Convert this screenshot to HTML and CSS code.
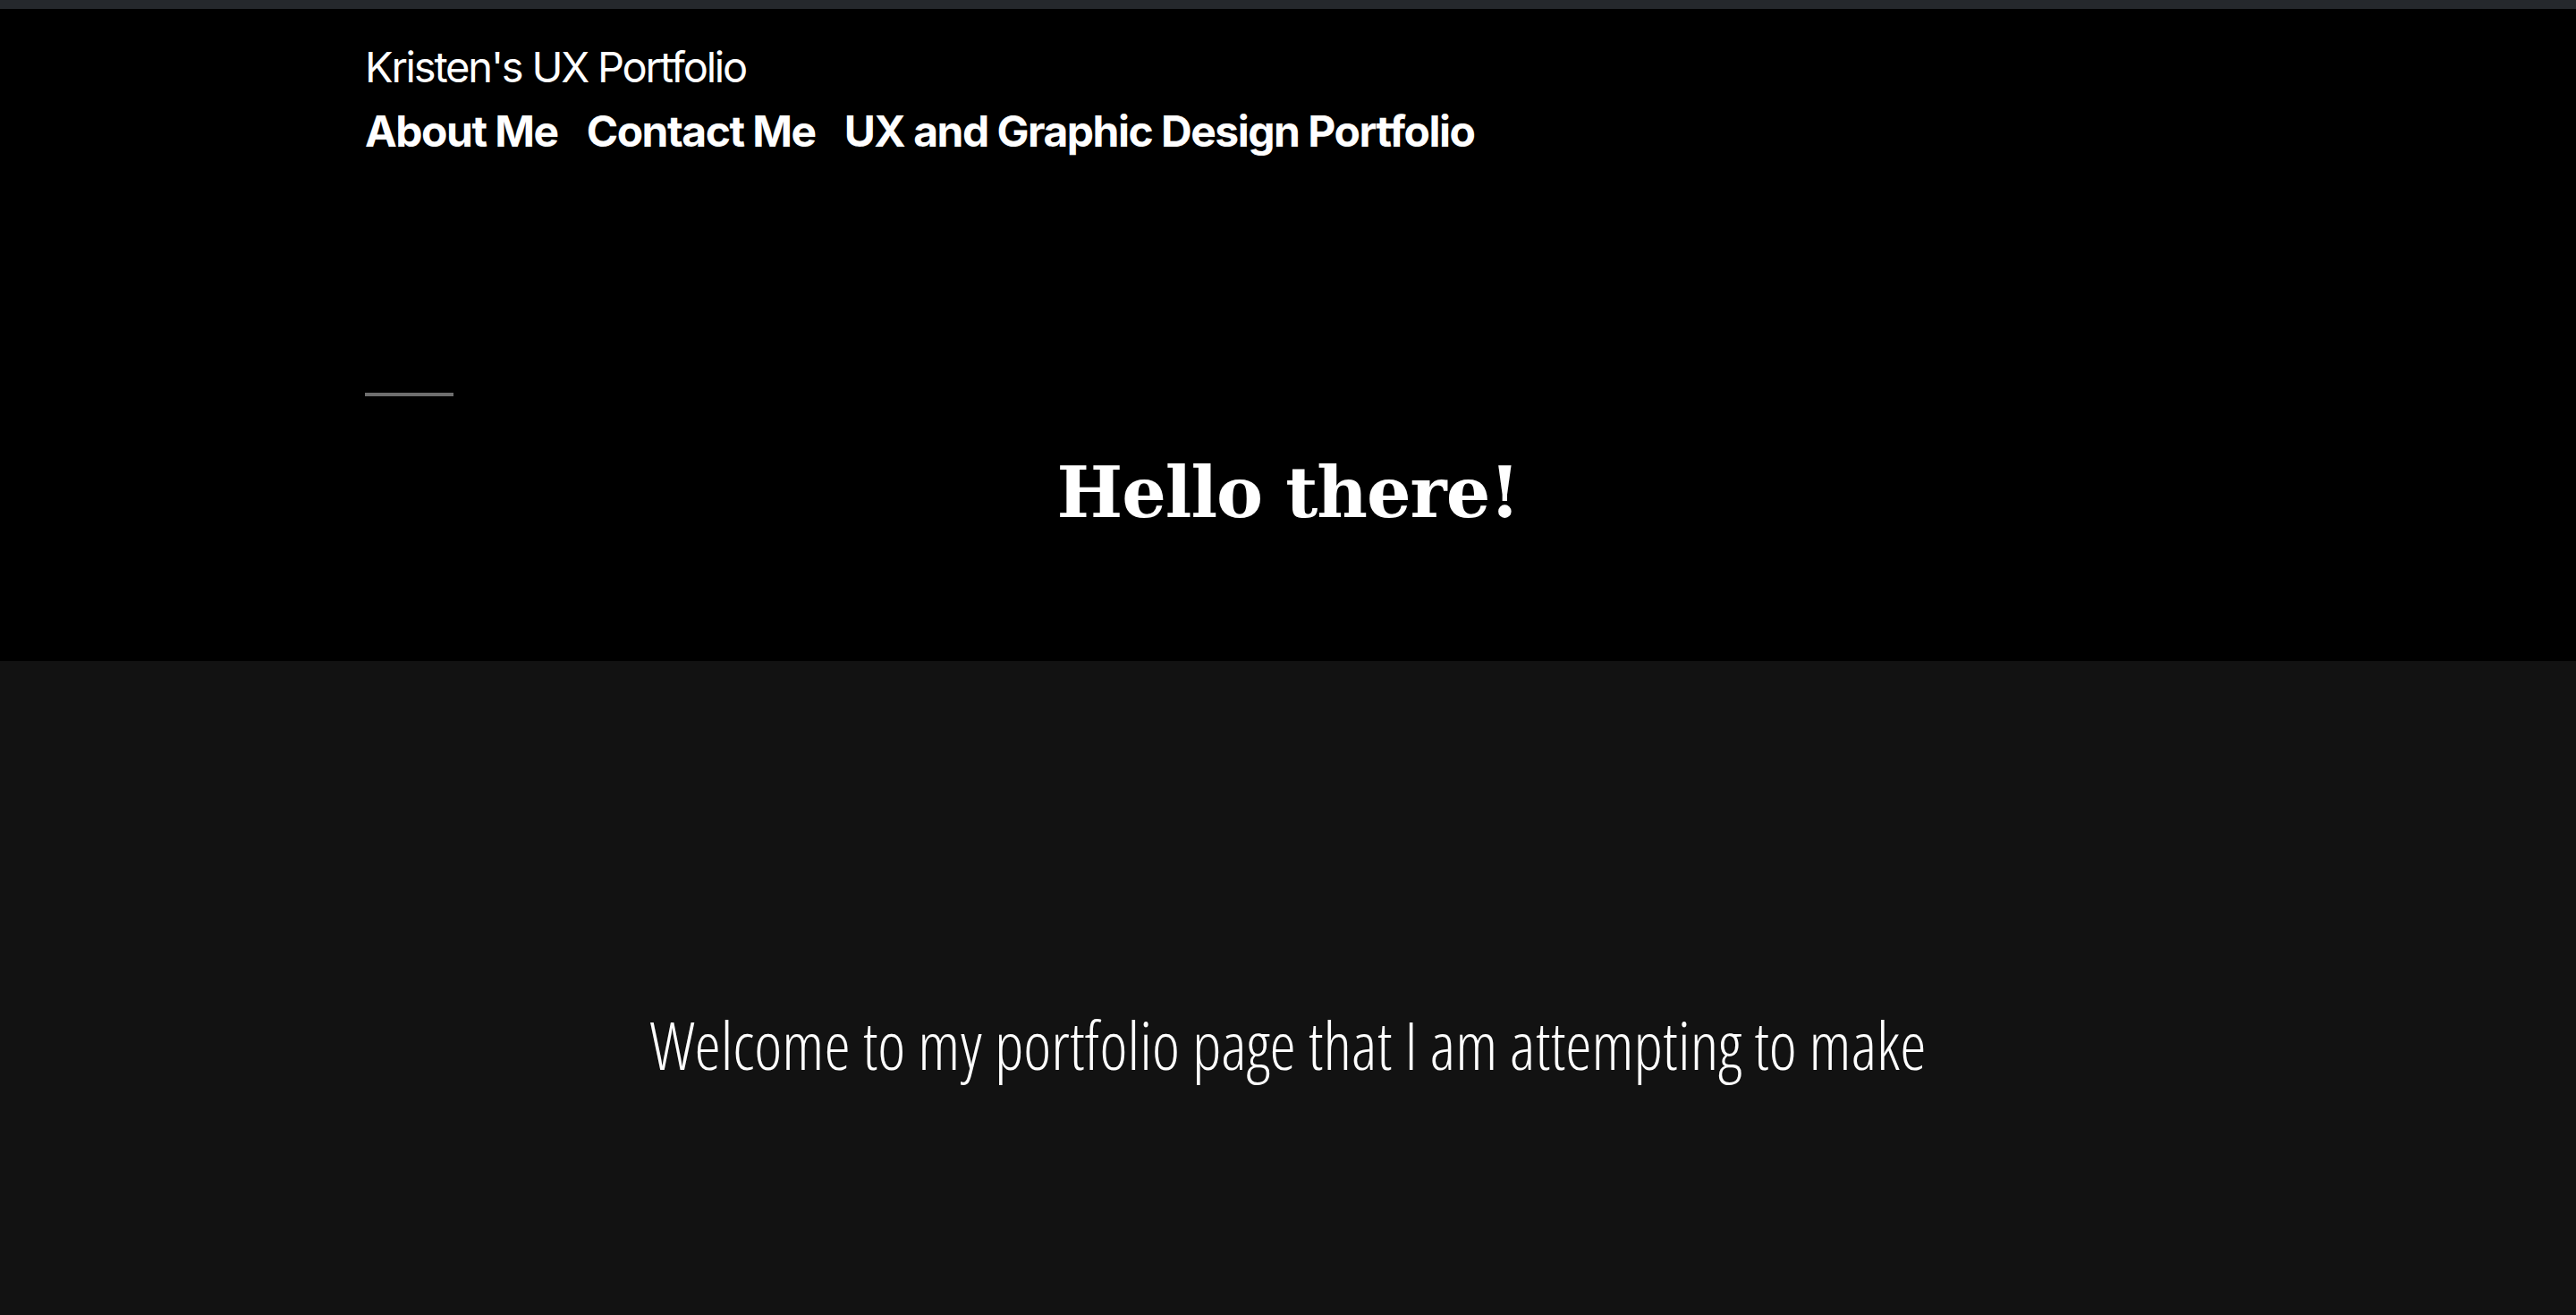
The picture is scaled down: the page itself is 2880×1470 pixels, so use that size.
FILE: index.html
```html
<!DOCTYPE html>
<html lang="en">
<head>
<meta charset="utf-8">
<title>Kristen's UX Portfolio</title>
<link rel="stylesheet" href="styles.css">
</head>
<body>
<div class="topbar"></div>
<header class="hero">
  <div class="masthead">
    <div class="site-title">Kristen's UX Portfolio</div>
    <nav class="nav">
      <a href="#">About Me</a>
      <a href="#">Contact Me</a>
      <a href="#">UX and Graphic Design Portfolio</a>
    </nav>
  </div>
  <div class="hero-body">
    <div class="rule"></div>
    <h1 class="headline">Hello there!</h1>
  </div>
</header>
<section class="welcome">
  <p class="welcome-text">Welcome to my portfolio page that I am attempting to make</p>
</section>
</body>
</html>
```
FILE: styles.css
```css
html, body {
  margin: 0;
  padding: 0;
}
body {
  background: #121212;
  color: #fff;
  font-family: Inter, "Liberation Sans", sans-serif;
}
.topbar {
  height: 10px;
  background: #25282c;
}
.hero {
  background: #000;
  height: 729px;
  box-sizing: border-box;
  padding: 36px 408px 0;
}
.masthead {
  display: flex;
  flex-direction: column;
}
.site-title {
  font-size: 47px;
  font-weight: 400;
  letter-spacing: -2.2px;
  line-height: 58px;
}
.nav {
  display: flex;
  gap: 32px;
  margin-top: 14px;
}
.nav a {
  color: #fff;
  text-decoration: none;
  font-weight: 700;
  font-size: 48px;
  letter-spacing: -1.5px;
  line-height: 58px;
}
.hero-body {
  padding-top: 263px;
}
.rule {
  width: 99px;
  height: 4px;
  background: #6e6e6e;
}
.headline {
  margin: 58px 0 0;
  text-align: center;
  font-family: "DejaVu Serif", serif;
  font-weight: 700;
  font-size: 78px;
  letter-spacing: -1px;
  line-height: 100px;
}
.welcome {
  height: 731px;
  box-sizing: border-box;
  padding-top: 379px;
}
.welcome-text {
  margin: 0;
  text-align: center;
  font-family: "Open Sans", sans-serif;
  font-weight: 300;
  font-stretch: 75%;
  font-size: 74px;
  line-height: 100px;
}
```
